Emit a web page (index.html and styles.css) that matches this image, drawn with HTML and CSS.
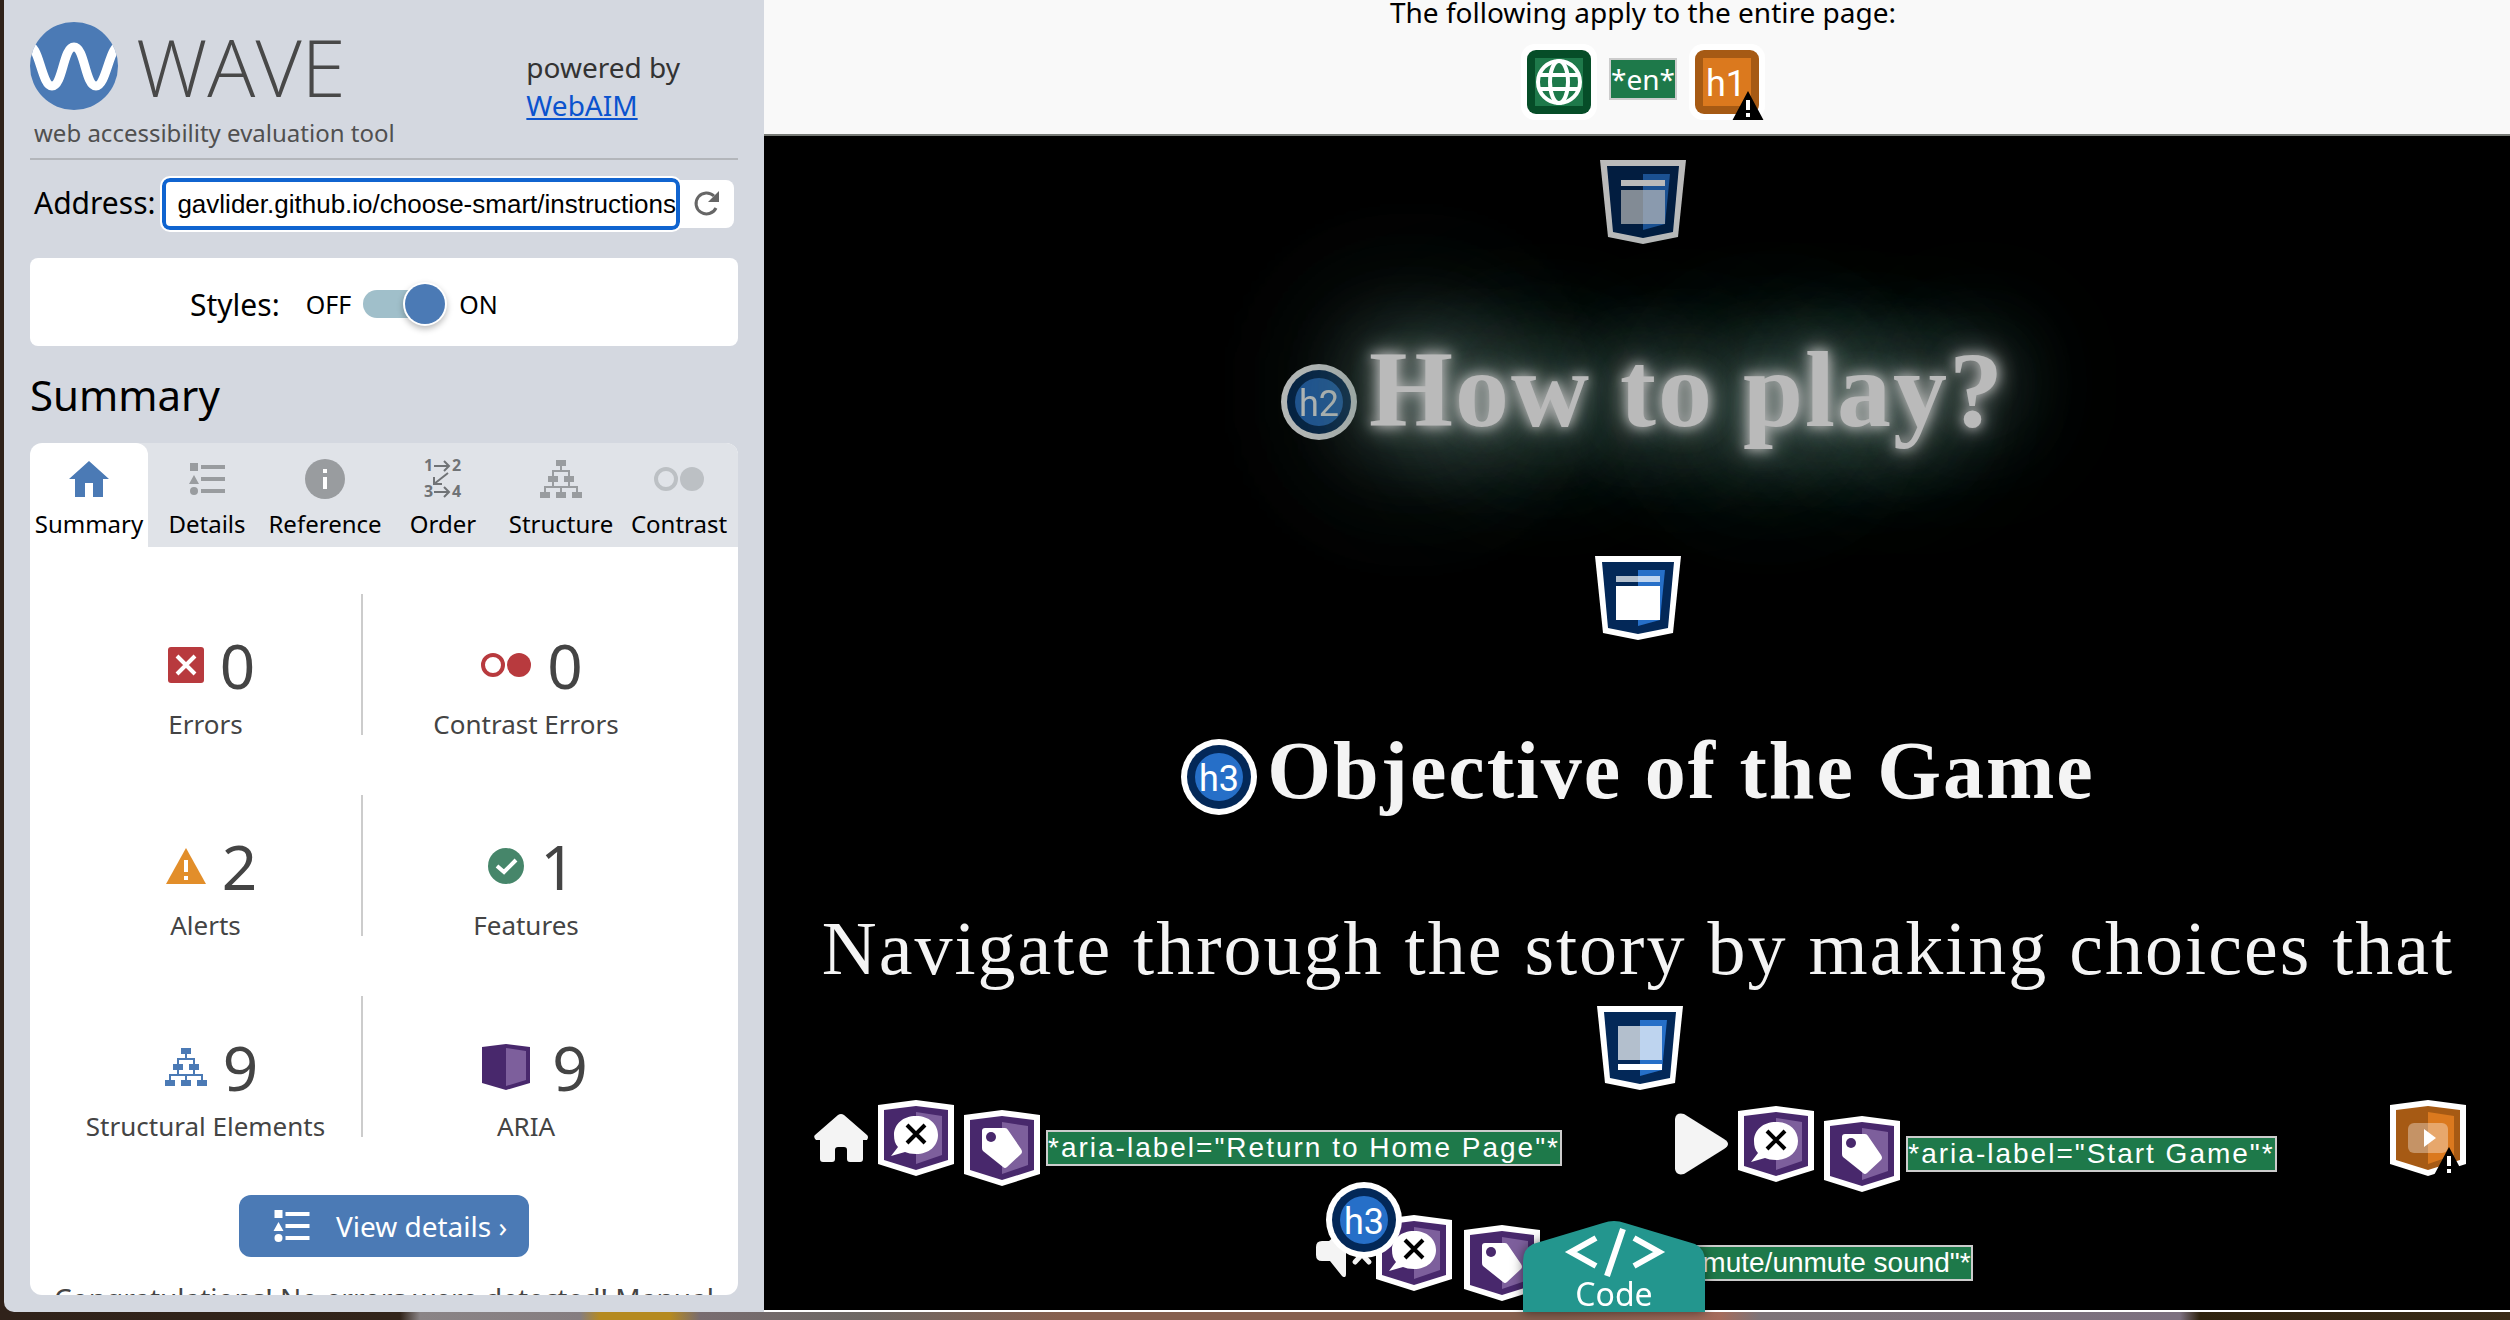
FILE: index.html
```html
<!DOCTYPE html>
<html lang="en">
<head>
<meta charset="utf-8">
<title>WAVE report</title>
<link rel="stylesheet" href="styles.css">
</head>
<body>
<svg class="defs" aria-hidden="true">
  <symbol id="list" viewBox="0 0 36 33"><path d="M1 0h8v8H1zM5 12l5 9H0zM12 2h24v4H12zM12 14h24v4H12zM12 26h24v4H12z"/><circle cx="5" cy="28" r="4"/></symbol>
  <symbol id="tree" viewBox="0 0 42 38"><path d="M16 0h10v6H16zM8 16h10v6H8zM24 16h10v6H24zM0 32h10v6H0zM16 32h10v6H16zM32 32h10v6H32z"/><path d="M21 5v6M13 16v-5h16v5M13 21v6M29 21v6M5 32v-5h32v5M21 27v5" fill="none" stroke="currentColor" stroke-width="2"/></symbol>
  <symbol id="rings" viewBox="0 0 50 24"><circle cx="12" cy="12" r="10" fill="none" stroke="currentColor" stroke-width="4"/><circle cx="38" cy="12" r="12"/></symbol>
  <symbol id="banner-shape" viewBox="0 0 86 84"><path fill="#fff" d="M0 0h86l-8 77-35 7-35-7z"/><path fill="#032858" d="M7 6h72l-6 66-30 6-30-6z"/><path fill="#266fc8" d="M43 14h27l-5 50-22 6z"/></symbol>
  <symbol id="aria-shape" viewBox="0 0 76 76"><path fill="#fff" d="M0 5l38-5 38 5v59L38 76 0 64z"/><path fill="#48286c" d="M6 10l32-4 32 4v50L38 70 6 60z"/><path fill="#7d5f9c" d="M38 12l26 4v39l-26 9z"/></symbol>
  <symbol id="aria-hidden-label" viewBox="0 0 76 76"><use href="#aria-shape"/><path fill="#fff" d="M38 16c13 0 22 8 22 19s-9 19-22 19c-5 0-8-1-11-2l-14 4 7-9c-3-3-4-7-4-12 0-11 9-19 22-19z"/><path d="M29 25l18 18M47 25L29 43" stroke="#000" stroke-width="4"/></symbol>
  <symbol id="aria-tag" viewBox="0 0 76 76"><use href="#aria-shape"/><path fill="#fff" d="M21 18h20q2 0 3 2l13 19q2 3 0 5L43 57q-2 2-4 0L19 41q-1-1-1-3V21q0-3 3-3z"/><circle cx="27" cy="27" r="5" fill="#48286c"/></symbol>
  <symbol id="warn" viewBox="0 0 32 30"><path fill="#000" d="M16 0l16 30H0z"/><path fill="#fff" d="M14 9h4v10h-4zM14 22h4v4h-4z"/></symbol>
</svg>
<div class="app">
  <aside class="sidebar">
    <header class="brand">
      <div class="brand-name">
        <div class="logo">
          <svg width="88" height="88" viewBox="0 0 88 88"><defs><clipPath id="disc"><circle cx="44" cy="44" r="44"/></clipPath></defs><circle cx="44" cy="44" r="44" fill="#4b7ab5"/><path clip-path="url(#disc)" d="M-3 25C9 18 11 64 22 64S33 25 44 25s11 39 22 39S80 18 91 25" fill="none" stroke="#fff" stroke-width="9"/></svg>
          <span class="logo-text">WAVE</span>
        </div>
        <p class="tagline">web accessibility evaluation tool</p>
      </div>
      <p class="powered">powered by<br><a href="#webaim">WebAIM</a></p>
    </header>
    <form class="address">
      <label for="url">Address:</label>
      <input id="url" type="text" value="gavlider.github.io/choose-smart/instructions">
      <button type="button" aria-label="Reload"><svg width="28" height="28" viewBox="0 0 28 28"><path d="M23 18A10.500 10.500 0 1 1 21 6" fill="none" stroke="#666" stroke-width="3"/><path d="M26 1v11H15z" fill="#666"/></svg></button>
    </form>
    <div class="styles-card">
      <span class="styles-title">Styles:</span>
      <label class="toggle"><span>OFF</span><input type="checkbox" checked><span class="track"></span><span>ON</span></label>
    </div>
    <h2 class="panel-title">Summary</h2>
    <section class="panel">
      <nav class="tabs">
        <button class="tab active"><span class="tab-icon"><svg width="40" height="36" viewBox="0 0 40 36"><path d="M20 0l20 18h-6v18H24V22h-8v14H6V18H0z"/></svg></span>Summary</button>
        <button class="tab"><span class="tab-icon"><svg width="36" height="33"><use href="#list"/></svg></span>Details</button>
        <button class="tab"><span class="tab-icon"><svg width="40" height="40" viewBox="0 0 40 40"><circle cx="20" cy="20" r="20"/><path fill="#fff" d="M18 10h4v4h-4zM18 18h4v12h-4z"/></svg></span>Reference</button>
        <button class="tab order"><span class="tab-icon"><svg width="44" height="52" viewBox="-2 -6 44 52"><text x="1" y="12">1</text><text x="29" y="12">2</text><text x="1" y="38">3</text><text x="29" y="38">4</text><path d="M11 7h15M21 2l5 5-5 5M11 33h15M21 28l5 5-5 5M25 14L11 25M11 18v7h8" fill="none" stroke="currentColor" stroke-width="2"/></svg></span>Order</button>
        <button class="tab"><span class="tab-icon"><svg width="42" height="38"><use href="#tree"/></svg></span>Structure</button>
        <button class="tab contrast"><span class="tab-icon"><svg width="50" height="24"><use href="#rings"/></svg></span>Contrast</button>
      </nav>
      <ul class="stats">
        <li><div class="count red"><svg width="36" height="36" viewBox="0 0 36 36"><rect width="36" height="36" rx="3"/><path d="M9 9l18 18M27 9L9 27" stroke="#fff" stroke-width="4"/></svg>0</div>Errors</li>
        <li><div class="count red"><svg width="50" height="24"><use href="#rings"/></svg>0</div>Contrast Errors</li>
        <li><div class="count amber"><svg width="40" height="36" viewBox="0 0 40 36"><path d="M20 0l20 36H0z"/><path fill="#fff" d="M18 12h4v12h-4zM18 28h4v4h-4z"/></svg>2</div>Alerts</li>
        <li><div class="count green"><svg width="36" height="36" viewBox="0 0 36 36"><circle cx="18" cy="18" r="18"/><path d="M9 18l7 6 12-12" fill="none" stroke="#fff" stroke-width="4"/></svg>1</div>Features</li>
        <li><div class="count blue"><svg width="42" height="38"><use href="#tree"/></svg>9</div>Structural Elements</li>
        <li><div class="count"><svg width="60" height="46" viewBox="-6 0 60 46"><path fill="#48286c" d="M0 3l24-3 24 3v36l-24 7-24-7z"/><path fill="#7d5f9c" d="M24 4l20 3v29l-20 6z"/></svg>9</div>ARIA</li>
      </ul>
      <button class="details-btn"><svg width="37" height="33"><use href="#list"/></svg>View details ›</button>
      <p class="congrats">Congratulations! No errors were detected! Manual</p>
    </section>
  </aside>
  <main class="page">
    <div class="page-notes">
      <p>The following apply to the entire page:</p>
      <div class="note-icons">
        <svg width="76" height="76" viewBox="0 0 76 76"><rect width="76" height="76" rx="14" fill="#fff"/><rect x="6" y="6" width="64" height="64" rx="9" fill="#064d28"/><rect x="14" y="14" width="48" height="48" fill="#1e794a"/><g fill="none" stroke="#fff" stroke-width="4"><circle cx="38" cy="38" r="21"/><ellipse cx="38" cy="38" rx="9" ry="21"/><path d="M19 31h38M19 45h38"/></g></svg>
        <span class="alt">*en*</span>
        <svg width="76" height="76" viewBox="0 0 76 76"><rect width="76" height="76" rx="14" fill="#fff"/><rect x="6" y="6" width="64" height="64" rx="9" fill="#a65a14"/><rect x="14" y="14" width="48" height="48" fill="#db791e"/><text class="mark" x="37" y="52">h1</text><use href="#warn" x="42" y="47" width="34" height="30"/></svg>
      </div>
    </div>
    <div class="game">
      <header class="game-head">
        <svg width="86" height="84" viewBox="0 0 86 84"><use href="#banner-shape"/><path fill="#fff" d="M21 20h44v6H21z"/><path fill="#fff" fill-opacity=".7" d="M21 30h44v34H21z"/></svg>
        <h1><svg width="76" height="76" viewBox="0 0 76 76"><circle cx="38" cy="38" r="38" fill="#fff"/><circle cx="38" cy="38" r="32" fill="#032858"/><circle cx="38" cy="38" r="24" fill="#266fc8"/><text class="mark" x="38" y="52">h2</text></svg><span>How to play?</span></h1>
      </header>
      <section class="story">
        <svg class="region" width="86" height="84" viewBox="0 0 86 84"><use href="#banner-shape"/><path fill="#fff" fill-opacity=".7" d="M21 20h44v6H21z"/><path fill="#fff" d="M21 30h44v34H21z"/></svg>
        <h2><svg width="76" height="76" viewBox="0 0 76 76"><circle cx="38" cy="38" r="38" fill="#fff"/><circle cx="38" cy="38" r="32" fill="#032858"/><circle cx="38" cy="38" r="24" fill="#266fc8"/><text class="mark" x="38" y="52">h3</text></svg><span>Objective of the Game</span></h2>
        <p>Navigate through the story by making choices that</p>
      </section>
      <footer class="game-foot">
        <svg width="86" height="84" viewBox="0 0 86 84"><use href="#banner-shape"/><path fill="#fff" fill-opacity=".7" d="M21 20h44v34H21z"/><path fill="#fff" d="M21 58h44v6H21z"/></svg>
        <div class="controls">
          <div class="control">
            <svg width="54" height="48" viewBox="0 0 54 48"><path fill="#f4f4f4" d="M24 1q3-2 6 0l23 20q2 2 0 5h-4v19q0 3-3 3H36q-3 0-3-3V36q0-3-3-3h-6q-3 0-3 3v9q0 3-3 3H9q-3 0-3-3V26H2q-3-3-1-5z"/></svg>
            <svg width="76" height="76"><use href="#aria-hidden-label"/></svg>
            <svg class="low" width="76" height="76"><use href="#aria-tag"/></svg>
            <span class="alt">*aria-label="Return to Home Page"*</span>
          </div>
          <div class="control start">
            <svg width="53" height="62" viewBox="0 0 53 62"><path fill="#f4f4f4" d="M0 6Q1-1 9 1L49 26q8 5 0 10L9 61q-8 2-9-5z"/></svg>
            <svg width="76" height="76"><use href="#aria-hidden-label"/></svg>
            <svg class="low" width="76" height="76"><use href="#aria-tag"/></svg>
            <span class="alt">*aria-label="Start Game"*</span>
          </div>
          <svg class="media" width="76" height="76" viewBox="0 0 76 76"><path fill="#fff" d="M0 5l38-5 38 5v59L38 76 0 64z"/><path fill="#a65a14" d="M6 10l32-4 32 4v50L38 70 6 60z"/><path fill="#db791e" d="M38 12l26 4v39l-26 9z"/><rect x="18" y="23" width="40" height="30" rx="6" fill="#fff" fill-opacity=".35"/><path fill="#fff" d="M34 29l12 9-12 9z"/><use href="#warn" x="43" y="47" width="32" height="30"/></svg>
        </div>
        <div class="sound">
          <svg class="speaker" width="60" height="48" viewBox="0 0 60 48"><path fill="#f4f4f4" d="M0 18q0-6 6-6h7L26 1q4-3 4 2v42q0 5-4 2L14 32H6q-6 0-6-6z"/><path d="M39 18l14 15M53 18L39 33" stroke="#f4f4f4" stroke-width="5" stroke-linecap="round"/></svg>
          <svg width="76" height="76"><use href="#aria-hidden-label"/></svg>
          <svg class="low" width="76" height="76"><use href="#aria-tag"/></svg>
          <span class="alt">*aria-label="mute/unmute sound"*</span>
          <svg class="over" width="76" height="76" viewBox="0 0 76 76"><circle cx="38" cy="38" r="38" fill="#fff"/><circle cx="38" cy="38" r="32" fill="#032858"/><circle cx="38" cy="38" r="24" fill="#266fc8"/><text class="mark" x="38" y="52">h3</text></svg>
        </div>
      </footer>
      <button class="code-tab">
        <svg width="182" height="91" viewBox="0 0 182 91"><path fill="#23968e" d="M0 91V40Q0 28 10 23L80 2q11-4 22 0l70 21q10 5 10 17v51z"/><path d="M73 17L48 31l25 14M111 17l25 14-25 14M100 8L84 55" fill="none" stroke="#fff" stroke-width="6"/></svg>
        <span>Code</span>
      </button>
    </div>
  </main>
</div>
<script src="script.js"></script>
</body>
</html>
```
FILE: script.js
```js
// Show the end of a long address, as after typing.
const url = document.getElementById("url");
url.scrollLeft = url.scrollWidth;
```
FILE: styles.css
```css
* { box-sizing: border-box; }
body {
  margin: 0;
  font-family: "Noto Sans", "Open Sans", sans-serif;
  color: #000;
  background: linear-gradient(90deg, #30221a 0, #32241a 400px, #8a8486 420px, #857d80 580px, #b58a20 600px, #b58a20 670px, #786c70 700px, #6d6864 860px, #87604f 1060px, #87604f 1560px, #a56c5c 1720px, #7d7478 1760px, #7c7080 2180px, #30240f 2200px, #3a2c18 100%);
}
h1, h2, p, ul { margin: 0; padding: 0; font-weight: 400; }
button { border: 0; padding: 0; background: none; font: inherit; color: inherit; }
svg { display: block; fill: currentColor; flex: none; }
.defs { position: absolute; width: 0; height: 0; }
.mark { font: 36px Roboto, sans-serif; letter-spacing: 0; fill: #fff; text-anchor: middle; }

.app { display: grid; grid-template-columns: 764px 1fr; height: 100vh; padding-bottom: 8px; }

/* Sidebar */
.sidebar {
  display: flex; flex-direction: column; min-height: 0;
  margin-left: 4px; padding: 18px 26px 17px;
  background: #d4d8e0; border-bottom-left-radius: 10px;
}
.brand { display: flex; justify-content: space-between; height: 142px; padding-right: 58px; border-bottom: 2px solid #b3b6bb; }
.logo { display: flex; align-items: center; gap: 18px; height: 96px; }
.logo-text { font: 300 80px/96px "Open Sans", sans-serif; color: #484848; }
.tagline { padding-left: 4px; font-size: 24px; line-height: 38px; color: #505050; }
.powered { padding-top: 30px; font-size: 28px; line-height: 38px; color: #333; }
.powered a { color: #0b53ce; }
.address { display: flex; align-items: center; margin: 16px 4px 0; height: 56px; }
.address label { font-size: 30px; margin-right: 6px; padding-bottom: 4px; }
.address input {
  flex: 1; min-width: 0; height: 52px; padding: 0 0 0 8px;
  font: 26px "Liberation Sans", Arial, sans-serif; text-align: right;
  border: 4px solid #1064d0; border-radius: 8px; outline: 2px solid #fff; background: #fff;
}
.address button { display: grid; place-items: center; width: 54px; height: 48px; background: #fff; border-radius: 0 8px 8px 0; }
.styles-card { display: flex; align-items: center; gap: 26px; margin-top: 26px; padding: 4px 0 0 160px; height: 88px; background: #fff; border-radius: 8px; }
.styles-title { font-size: 30px; }
.toggle { display: flex; align-items: center; gap: 12px; font-size: 25px; }
.toggle input { position: absolute; opacity: 0; }
.track { position: relative; width: 82px; height: 28px; margin-right: 2px; border-radius: 14px; background: #a0bfca; }
.track::after {
  content: ""; position: absolute; right: 0; top: -6px; width: 40px; height: 40px;
  border-radius: 50%; background: #4b7ab5; box-shadow: 0 0 0 2px #fff, 0 3px 6px 2px #0004;
}
.panel-title { margin: 19px 0 18px; font-size: 42px; line-height: 60px; }
.panel { flex: 1; min-height: 0; overflow: hidden; display: flex; flex-direction: column; background: #fff; border-radius: 12px; }
.tabs { flex: none; display: grid; grid-template-columns: repeat(6, minmax(0, 1fr)); background: #e0e3e8; }
.tab { display: flex; flex-direction: column; align-items: center; height: 104px; padding-top: 10px; font-size: 24px; line-height: 38px; }
.tab-icon { display: grid; place-items: center; height: 52px; color: #999c9f; }
.active { background: #fff; border-radius: 12px 12px 0 0; }
.active .tab-icon { color: #4b7ab5; }
.order .tab-icon { color: #707376; }
.order text { font: bold 16px "Noto Sans", sans-serif; }
.contrast .tab-icon { color: #bcc0c4; }
.stats { flex: none; display: grid; grid-template-columns: 313px 326px; row-gap: 60px; margin: 47px 0 0 20px; list-style: none; }
.stats li { height: 141px; padding-top: 28px; text-align: center; font-size: 26px; line-height: 32px; color: #444; }
.stats li:nth-child(odd) { border-right: 2px solid #ccc; }
.count { display: flex; align-items: center; justify-content: center; gap: 16px; height: 86px; padding-left: 12px; font-size: 62px; line-height: 86px; }
.red svg { color: #b83a3e; }
.amber svg { color: #e28e2a; }
.green svg { color: #46866a; }
.blue svg { color: #4b7ab5; }
.details-btn { flex: none; align-self: center; display: flex; align-items: center; gap: 26px; margin-top: 58px; padding: 0 22px 0 34px; height: 62px; font-size: 28px; color: #fff; background: #4b7ab5; border-radius: 12px; }
.congrats { flex: none; margin-top: 20px; text-align: center; font-size: 28px; line-height: 42px; color: #444; white-space: nowrap; }

/* Evaluated page */
.page { display: flex; flex-direction: column; min-width: 0; border-bottom: 2px solid #fff; }
.page-notes { flex: none; height: 136px; background: #f9f9f9; border-bottom: 2px solid #777a75; text-align: center; padding-left: 12px; }
.page-notes p { height: 44px; font-size: 28px; line-height: 24px; }
.note-icons { display: flex; justify-content: center; gap: 12px; }
.alt { padding: 0 2px; border: 2px solid #ccc; background: #1e794a; color: #fff; white-space: nowrap; font-size: 28px; line-height: 32px; }
.note-icons .alt { align-self: flex-start; margin-top: 14px; padding: 0; line-height: 38px; }
.game {
  position: relative; flex: 1; min-height: 0; display: flex; flex-direction: column;
  background: #000; color: #f4f4f4; font-family: "Liberation Serif", serif; letter-spacing: 2px;
}
.game-head { display: flex; flex-direction: column; align-items: center; gap: 74px; padding: 24px 0 0 12px; opacity: .73; color: #fff; }
.game-head h1, .story h2 { display: flex; align-items: center; font-weight: 700; white-space: nowrap; }
.game-head h1 { gap: 12px; font-size: 108px; line-height: 144px; }
.game-head span { padding-bottom: 24px; text-shadow: 0 0 12px #fff, 0 0 24px #fff, 0 0 80px #7fae9e, 0 0 100px #7fae9e, 0 0 160px #7fae9e, 0 0 200px #8aa8a0, 0 0 260px #8a9c98; }
.story { position: relative; display: flex; flex-direction: column; align-items: center; padding: 70px 0 0 2px; text-align: center; }
.story h2 { gap: 10px; margin-top: 76px; font-size: 82px; line-height: 110px; }
.story h2 span { padding-bottom: 12px; }
.story p { margin-top: 60px; font-size: 76px; line-height: 100px; white-space: nowrap; }
.game-foot { position: relative; margin-top: auto; padding: 0 44px 6px 50px; font-family: "Liberation Sans", Arial, sans-serif; }
.game-foot > svg { margin: 0 auto; }
.controls { display: flex; justify-content: space-between; align-items: center; height: 112px; padding-bottom: 16px; }
.control { display: flex; align-items: center; gap: 10px; }
.start { padding-top: 12px; }
.game-foot .low { margin-top: 20px; }
.game-foot .low + .alt { margin-top: 20px; }
.control .alt, .sound .alt { margin-left: -4px; padding: 0; }
.sound { position: relative; display: flex; align-items: center; gap: 12px; height: 102px; margin-left: 502px; letter-spacing: 0; }
.sound svg:nth-child(2) { margin-left: -12px; }
.over { position: absolute; left: 10px; top: -20px; }
.code-tab { position: absolute; left: 759px; bottom: -2px; color: #fff; letter-spacing: 0; filter: drop-shadow(0 0 6px #0008); }
.code-tab span { position: absolute; inset: auto 0 0; font: 32px/36px "Noto Sans", sans-serif; }
```
